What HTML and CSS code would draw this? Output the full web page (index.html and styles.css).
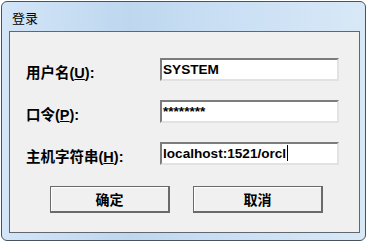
FILE: index.html
```html
<!DOCTYPE html>
<html lang="zh-CN">
<head>
    <meta charset="UTF-8">
    <meta name="viewport" content="width=device-width, initial-scale=1.0">
    <title>登录</title>
    <link rel="stylesheet" href="styles.css">
</head>
<body>
    <div class="window">
        <div class="title-bar">登录</div>
        <div class="panel">
            <div class="form">
                <label class="label">用户名(<u>U</u>):</label>
                <div class="field">SYSTEM</div>
                <label class="label">口令(<u>P</u>):</label>
                <div class="field">********</div>
                <label class="label">主机字符串(<u>H</u>):</label>
                <div class="field">localhost:1521/orcl<span class="caret"></span></div>
            </div>
            <div class="actions">
                <button class="btn btn-ok">确定</button>
                <button class="btn btn-cancel">取消</button>
            </div>
        </div>
    </div>
</body>
</html>
```

FILE: styles.css
```css
body {
    margin: 0;
    background-color: #ffffff;
    font-family: "Liberation Sans", "Noto Sans CJK SC", sans-serif;
}

.window {
    width: 365px;
    height: 240px;
    margin: 1px 0 0 1px;
    padding: 0 5px 7px 7px;
    box-sizing: border-box;
    border: 1px solid #4a525c;
    border-radius: 6px;
    background: linear-gradient(to right, #d3e5f7, #bed7ef 35%, #cbe0f4 65%, #d8e8f7);
    display: flex;
    flex-direction: column;
}

.title-bar {
    height: 29px;
    line-height: 31px;
    padding-left: 3px;
    font-size: 13px;
    color: #000;
    font-family: "Noto Sans CJK SC", sans-serif;
}

.panel {
    flex: 1;
    border: 1px solid #62676e;
    background-color: #f0f0f0;
}

.form {
    display: grid;
    grid-template-columns: 134px 179px;
    grid-auto-rows: 23px;
    row-gap: 19px;
    padding: 26px 0 0 16px;
}

.label {
    align-self: center;
    padding-top: 4px;
    font-size: 14.5px;
    font-weight: bold;
    color: #000;
}

.field {
    box-sizing: border-box;
    border: 2px solid;
    border-color: #7c7c7c #e2e2e2 #e2e2e2 #7c7c7c;
    background-color: #fff;
    padding-left: 1px;
    font-size: 13.6px;
    font-weight: bold;
    line-height: 19px;
    color: #000;
    white-space: nowrap;
}

.caret {
    display: inline-block;
    width: 1px;
    height: 16px;
    background-color: #000;
    vertical-align: -3px;
    margin-left: 1px;
}

.actions {
    display: flex;
    gap: 23px;
    padding-left: 40px;
    margin-top: 21px;
}

.btn {
    height: 27px;
    box-sizing: border-box;
    border: 1px solid #6a6a6a;
    border-right-width: 2px;
    border-bottom-width: 2px;
    background-color: #f0f0f0;
    box-shadow: inset 1px 1px #ffffff;
    font-family: "Noto Sans CJK SC", sans-serif;
    font-size: 14px;
    font-weight: bold;
    color: #000;
    padding: 0;
}

.btn-ok {
    width: 120px;
}

.btn-cancel {
    width: 130px;
}
```
